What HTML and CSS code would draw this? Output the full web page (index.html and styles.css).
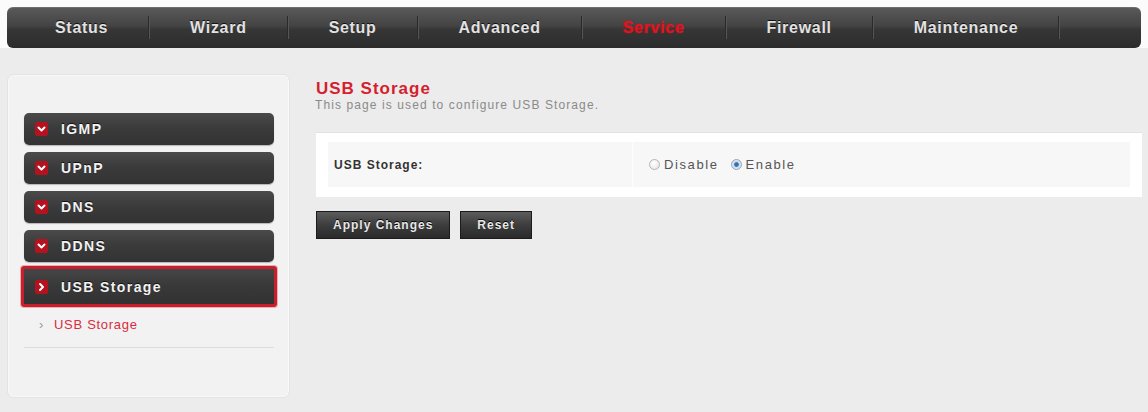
FILE: index.html
```html
<!DOCTYPE html>
<html lang="en">
<head>
<meta charset="utf-8">
<title>USB Storage</title>
<link rel="stylesheet" href="styles.css">
</head>
<body>
<header class="header">
  <nav class="topnav">
    <a class="topnav-item">Status</a>
    <a class="topnav-item">Wizard</a>
    <a class="topnav-item">Setup</a>
    <a class="topnav-item">Advanced</a>
    <a class="topnav-item is-current">Service</a>
    <a class="topnav-item">Firewall</a>
    <a class="topnav-item">Maintenance</a>
  </nav>
</header>

<div class="layout">
  <aside class="sidebar">
    <ul class="menu">
      <li class="menu-item">
        <svg class="menu-icon" viewBox="0 0 13 14"><rect x="0" y="0" width="13" height="14" rx="2"/><path d="M3.5 5.5 L6.5 8.5 L9.5 5.5"/></svg>
        <span>IGMP</span>
      </li>
      <li class="menu-item">
        <svg class="menu-icon" viewBox="0 0 13 14"><rect x="0" y="0" width="13" height="14" rx="2"/><path d="M3.5 5.5 L6.5 8.5 L9.5 5.5"/></svg>
        <span>UPnP</span>
      </li>
      <li class="menu-item">
        <svg class="menu-icon" viewBox="0 0 13 14"><rect x="0" y="0" width="13" height="14" rx="2"/><path d="M3.5 5.5 L6.5 8.5 L9.5 5.5"/></svg>
        <span>DNS</span>
      </li>
      <li class="menu-item">
        <svg class="menu-icon" viewBox="0 0 13 14"><rect x="0" y="0" width="13" height="14" rx="2"/><path d="M3.5 5.5 L6.5 8.5 L9.5 5.5"/></svg>
        <span>DDNS</span>
      </li>
      <li class="menu-item is-open">
        <svg class="menu-icon" viewBox="0 0 13 14"><rect x="0" y="0" width="13" height="14" rx="2"/><path d="M5 4 L8 7 L5 10"/></svg>
        <span>USB Storage</span>
      </li>
    </ul>
    <ul class="submenu">
      <li class="submenu-item"><span class="submenu-bullet">›</span><a class="submenu-link">USB Storage</a></li>
    </ul>
  </aside>

  <main class="content">
    <h1 class="page-title">USB Storage</h1>
    <p class="page-desc">This page is used to configure USB Storage.</p>

    <div class="form-box">
      <div class="form-row">
        <div class="form-label">USB Storage:</div>
        <div class="form-field">
          <label class="radio-option"><span class="radio"></span>Disable</label>
          <label class="radio-option"><span class="radio is-checked"></span>Enable</label>
        </div>
      </div>
    </div>

    <div class="actions">
      <button class="btn">Apply Changes</button>
      <button class="btn">Reset</button>
    </div>
  </main>
</div>
</body>
</html>
```

FILE: styles.css
```css
* {
  box-sizing: border-box;
}

body {
  margin: 0;
  background: #ececec;
  font-family: "Liberation Sans", Arial, sans-serif;
  color: #333;
}

/* ---------- top navigation ---------- */
.header {
  background: #fbfbfb;
  padding: 7px 7px 0 7px;
}

.topnav {
  display: flex;
  height: 41px;
  padding-left: 7px;
  border-radius: 6px;
  background: linear-gradient(#5a5a5a 0%, #444 45%, #363636 55%, #2c2c2c 100%);
  box-shadow: inset 0 1px 0 rgba(255, 255, 255, 0.12);
}

.topnav-item {
  position: relative;
  display: flex;
  align-items: center;
  padding: 0 41px;
  font-size: 16px;
  font-weight: bold;
  letter-spacing: 0.7px;
  color: #e2e2e2;
  text-shadow: 0 -1px 0 #111;
  cursor: pointer;
}

.topnav-item::after {
  content: "";
  position: absolute;
  right: 0;
  top: 9px;
  bottom: 9px;
  width: 1px;
  background: #2a2a2a;
  box-shadow: 1px 0 0 #555;
}

.topnav-item.is-current {
  color: #e2131f;
  text-shadow: 0 0 2px rgba(230, 20, 30, 0.6);
}

/* ---------- page layout ---------- */
.layout {
  display: flex;
  gap: 25px;
  padding: 26px 6px 14px 7px;
}

/* ---------- sidebar ---------- */
.sidebar {
  flex: 0 0 283px;
  height: 324px;
  padding: 38px 15px 0 16px;
  background: #f2f2f2;
  border: 1px solid #e3e3e3;
  border-radius: 7px;
  box-shadow: inset 0 0 0 1px #f9f9f9;
}

.menu {
  list-style: none;
  margin: 0;
  padding: 0;
  display: flex;
  flex-direction: column;
  gap: 7px;
}

.menu-item {
  display: flex;
  align-items: center;
  height: 32px;
  padding-left: 11px;
  border-radius: 5px;
  background: linear-gradient(#4a4a4a, #3a3a3a 50%, #333);
  box-shadow: 0 1px 1px rgba(0, 0, 0, 0.25);
  color: #f2f2f2;
  font-size: 14px;
  font-weight: bold;
  letter-spacing: 1.4px;
  text-shadow: 0 -1px 0 #111;
}

.menu-item.is-open {
  height: 41px;
  margin: -3px -3px 0 -3px;
  padding-left: 11px;
  border: 3px solid #c81f2c;
  border-radius: 3px;
  box-shadow: 0 0 0 1px rgba(226, 90, 100, 0.45);
  background: linear-gradient(#464646, #383838 50%, #323232);
}

.menu-icon {
  flex: 0 0 13px;
  width: 13px;
  height: 14px;
  margin-right: 13px;
}

.menu-icon rect {
  fill: #b3121e;
}

.menu-icon path {
  fill: none;
  stroke: #fff;
  stroke-width: 2;
  stroke-linecap: round;
  stroke-linejoin: round;
}

.submenu {
  list-style: none;
  margin: 8px 0 0 0;
  padding: 0 0 14px 0;
  border-bottom: 1px solid #dcdcdc;
}

.submenu-item {
  display: flex;
  align-items: center;
  height: 18px;
  padding-left: 15px;
}

.submenu-bullet {
  width: 15px;
  color: #9a9a9a;
  font-size: 13px;
}

.submenu-link {
  color: #d92c42;
  font-size: 13px;
  letter-spacing: 0.7px;
  cursor: pointer;
}

/* ---------- main content ---------- */
.content {
  flex: 1;
  padding-top: 6px;
}

.page-title {
  margin: 0 0 0 1px;
  font-size: 17px;
  line-height: 18px;
  letter-spacing: 1px;
  font-weight: bold;
  color: #d51f2e;
}

.page-desc {
  margin: 0;
  font-size: 12px;
  line-height: 14px;
  letter-spacing: 1.1px;
  color: #8a8a8a;
}

.form-box {
  margin-top: 20px;
  margin-left: 1px;
  padding: 9px 12px 10px 12px;
  background: #fff;
  border-top: 1px solid #e2e2e2;
}

.form-row {
  display: grid;
  grid-template-columns: 305px 1fr;
  height: 45px;
  background: #f7f7f7;
}

.form-label {
  display: flex;
  align-items: center;
  padding-left: 6px;
  border-right: 1px solid #fdfdfd;
  font-size: 12px;
  font-weight: bold;
  letter-spacing: 1px;
  color: #333;
}

.form-field {
  display: flex;
  align-items: center;
  gap: 12px;
  padding-left: 16px;
}

.radio-option {
  display: flex;
  align-items: center;
  font-size: 13px;
  letter-spacing: 1.6px;
  color: #555;
}

.radio {
  width: 11px;
  height: 11px;
  margin-right: 4px;
  border-radius: 50%;
  border: 1px solid #b5b5b5;
  background: radial-gradient(circle at 40% 35%, #fff, #e2e2e2);
}

.radio.is-checked {
  border-color: #8fa6bf;
  background: radial-gradient(circle at 50% 50%, #2f6aa6 0, #3b78b6 30%, #cfdbe8 45%, #eef2f6 100%);
}

.actions {
  display: flex;
  gap: 10px;
  margin-top: 14px;
  margin-left: 1px;
}

.btn {
  height: 28px;
  padding: 0 16px;
  border: 1px solid #1b1b1b;
  background: linear-gradient(#5c5c5c, #3d3d3d 50%, #2a2a2a);
  color: #e8e8e8;
  font-family: "Liberation Sans", Arial, sans-serif;
  font-size: 12px;
  font-weight: bold;
  letter-spacing: 1px;
  text-shadow: 0 -1px 0 #000;
  cursor: pointer;
}
```
